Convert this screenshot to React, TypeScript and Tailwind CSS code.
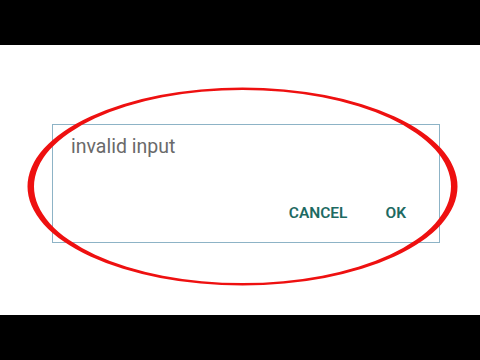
import React from 'react'

function RedCircle() {
  // hand-drawn style ellipse: thicker on the sides, thin top and bottom
  const cx = 242.5
  const cy = 141.5
  const ring = (rx: number, ry: number) =>
    `M ${cx - rx} ${cy} a ${rx} ${ry} 0 1 0 ${rx * 2} 0 a ${rx} ${ry} 0 1 0 ${-rx * 2} 0 Z`

  return (
    <svg
      className="pointer-events-none absolute inset-0"
      width="480"
      height="270"
      viewBox="0 0 480 270"
    >
      <path
        d={`${ring(215, 99)} ${ring(208.5, 96.5)}`}
        fill="#ee1010"
        fillRule="evenodd"
      />
    </svg>
  )
}

export default function App() {
  return (
    <div className="flex h-[360px] w-[480px] flex-col bg-white font-['Roboto','Liberation_Sans',sans-serif]">
      <div className="h-[45px] bg-black" />

      <div className="relative h-[270px] bg-white pl-[52px] pt-[79px]">
        {/* dialog */}
        <div className="flex h-[119px] w-[388px] flex-col border border-[#8db3c6] bg-white">
          <p className="pl-[18px] pt-[11px] text-[19.5px] leading-[22px] text-[#6a6a6a]">
            invalid input
          </p>
          <div className="mt-[46px] flex justify-end gap-[38px] pr-[33px] text-[15.5px] font-semibold leading-[18px] text-[#1d6a62]">
            <span>CANCEL</span>
            <span>OK</span>
          </div>
        </div>

        <RedCircle />
      </div>

      <div className="h-[45px] bg-black" />
    </div>
  )
}
